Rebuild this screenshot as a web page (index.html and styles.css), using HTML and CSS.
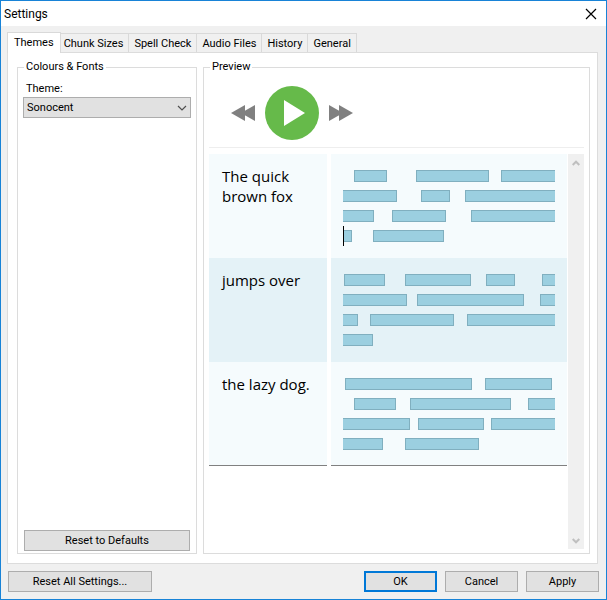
FILE: index.html
```html
<!DOCTYPE html>
<html lang="en">
<head>
    <meta charset="UTF-8">
    <meta name="viewport" content="width=device-width, initial-scale=1.0">
    <title>Settings</title>
    <link rel="stylesheet" href="styles.css">
</head>
<body>
    <div class="window">
        <header class="titlebar">
            <h1 class="title">Settings</h1>
            <button class="close" aria-label="Close">
                <svg width="12" height="12" viewBox="0 0 12 12"><path d="M1 1L11 11M11 1L1 11" fill="none" stroke="#000" stroke-width="1.2"/></svg>
            </button>
        </header>
        <main class="content">
            <nav class="tabs">
                <button class="tab active">Themes</button>
                <button class="tab">Chunk Sizes</button>
                <button class="tab">Spell Check</button>
                <button class="tab">Audio Files</button>
                <button class="tab">History</button>
                <button class="tab">General</button>
            </nav>
            <div class="page">
                <fieldset class="group colours">
                    <legend>Colours &amp; Fonts</legend>
                    <label class="theme-label" for="theme">Theme:</label>
                    <div class="select-wrap">
                        <select id="theme" class="theme">
                            <option>Sonocent</option>
                        </select>
                        <svg class="arrow" width="10" height="6" viewBox="0 0 10 6"><path d="M1 1L5 5L9 1" fill="none" stroke="#505050" stroke-width="1.2"/></svg>
                    </div>
                    <button class="btn reset">Reset to Defaults</button>
                </fieldset>
                <fieldset class="group preview">
                    <legend>Preview</legend>
                    <div class="player">
                        <button class="control" aria-label="Rewind">
                            <svg width="24" height="18" viewBox="0 0 24 18"><path d="M0 9L14 1V17ZM10 9L24 1V17Z" fill="#808080"/></svg>
                        </button>
                        <button class="control" aria-label="Play">
                            <svg width="54" height="54" viewBox="0 0 54 54"><circle cx="27" cy="27" r="27" fill="#66ba4a"/><path d="M19 14L40 27L19 40Z" fill="#fff"/></svg>
                        </button>
                        <button class="control" aria-label="Fast forward">
                            <svg width="24" height="18" viewBox="0 0 24 18"><path d="M0 1L14 9L0 17ZM10 1L24 9L10 17Z" fill="#808080"/></svg>
                        </button>
                    </div>
                    <div class="document">
                        <div class="rows">
                            <div class="row">
                                <p class="text">The quick brown fox</p>
                                <div class="audio"></div>
                            </div>
                            <div class="row alt">
                                <p class="text">jumps over</p>
                                <div class="audio"></div>
                            </div>
                            <div class="row">
                                <p class="text">the lazy dog.</p>
                                <div class="audio"></div>
                            </div>
                        </div>
                        <div class="scrollbar">
                            <svg width="8" height="6" viewBox="0 0 8 6"><path d="M.7 5L4 1.7L7.3 5" fill="none" stroke="#bfbfbf" stroke-width="2"/></svg>
                            <svg width="8" height="6" viewBox="0 0 8 6"><path d="M.7 1L4 4.3L7.3 1" fill="none" stroke="#bfbfbf" stroke-width="2"/></svg>
                        </div>
                    </div>
                </fieldset>
            </div>
        </main>
        <footer class="buttons">
            <button class="btn reset-all">Reset All Settings...</button>
            <button class="btn default">OK</button>
            <button class="btn">Cancel</button>
            <button class="btn">Apply</button>
        </footer>
    </div>
    <script src="script.js"></script>
</body>
</html>
```
FILE: styles.css
```css
* {
    box-sizing: border-box;
}
body {
    margin: 0;
    font-family: Roboto, "Liberation Sans", sans-serif;
    font-size: 11px;
    line-height: 14px;
    color: #000;
}
button, select {
    margin: 0;
    padding: 0;
    font: inherit;
    color: inherit;
}
svg {
    display: block;
}
.window {
    display: flex;
    flex-direction: column;
    min-height: 100vh;
    background: #f0f0f0;
    border: 1px solid #1883d7;
}
.titlebar {
    display: flex;
    justify-content: space-between;
    align-items: center;
    height: 25px;
    padding: 0 9px 0 3px;
    background: #fff;
}
.title {
    margin: 0;
    font-size: 12px;
    font-weight: normal;
}
.close {
    background: none;
    border: none;
}
.content {
    flex: 1;
    display: flex;
    flex-direction: column;
    padding: 6px 8px 0 6px;
}
.tabs {
    display: flex;
    align-items: flex-end;
}
.tab {
    height: 19px;
    padding: 2px 5px 0;
    background: #f0f0f0;
    border: 1px solid #d9d9d9;
    border-width: 1px 1px 0 0;
}
.tab.active {
    position: relative;
    height: 21px;
    padding: 0 6px;
    margin: 0 -2px -1px 0;
    background: #fff;
    border-left-width: 1px;
}
.page {
    flex: 1;
    display: flex;
    gap: 6px;
    padding: 7px 7px 9px 9px;
    background: #fff;
    border: 1px solid #dcdcdc;
}
.group {
    display: flex;
    flex-direction: column;
    min-width: 0;
    margin: 0;
    padding: 0 5px;
    border: 1px solid #dcdcdc;
}
.group legend {
    margin-left: 1px;
    padding: 0 2px;
}
.colours {
    flex: 0 0 180px;
    padding-bottom: 2px;
}
.theme-label {
    padding: 8px 3px 1px;
}
.select-wrap {
    position: relative;
}
.theme {
    appearance: none;
    width: 100%;
    height: 21px;
    padding: 1px 3px 0;
    background: #e1e1e1;
    border: 1px solid #adadad;
    border-radius: 0;
}
.arrow {
    position: absolute;
    top: 8px;
    right: 4px;
    pointer-events: none;
}
.btn {
    width: 73px;
    height: 21px;
    padding-top: 1px;
    background: #e1e1e1;
    border: 1px solid #adadad;
}
.btn.default {
    border: 2px solid #0078d7;
}
.reset {
    width: auto;
    margin: auto 1px 0;
}
.preview {
    flex: 1;
    padding-bottom: 4px;
}
.player {
    display: flex;
    align-items: center;
    gap: 10px;
    padding: 12px 22px 7px;
    border-bottom: 1px solid #eee;
}
.control {
    background: none;
    border: none;
}
.document {
    flex: 1;
    display: flex;
    gap: 1px;
    margin-top: 6px;
}
.rows {
    flex: 1;
}
.row {
    display: grid;
    grid-template-columns: 1fr 2fr;
    gap: 4px;
    height: 104px;
}
.text, .audio {
    margin: 0;
    background: #f5fbfd;
}
.alt .text, .alt .audio {
    background: #e4f2f7;
}
.row:last-child .text, .row:last-child .audio {
    border-bottom: 1px solid #808080;
}
.text {
    padding: 12px 13px 0;
    font-family: "Open Sans", "Noto Sans", sans-serif;
    font-size: 15px;
    line-height: 20px;
}
.audio {
    padding: 12px 12px 0;
}
.line {
    display: flex;
    align-items: center;
    height: 20px;
}
.chunk {
    flex: none;
    height: 12px;
    background: #9bcfe0;
    border: 1px solid #80afbf;
}
.chunk.from-prev {
    border-left: none;
}
.chunk.to-next {
    border-right: none;
}
.cursor {
    width: 1px;
    height: 20px;
    margin-right: -1px;
    background: #000;
    z-index: 1;
}
.scrollbar {
    display: flex;
    flex-direction: column;
    justify-content: space-between;
    align-items: center;
    width: 16px;
    padding: 6px 0 5px;
    background: #f0f0f0;
}
.buttons {
    display: flex;
    gap: 8px;
    padding: 7px;
}
.reset-all {
    width: 144px;
    margin-right: auto;
}
```
FILE: script.js
```javascript
// [start, end] of every chunk, line by line. Each line is 212 wide.
const lineWidth = 212;
const audio = [
    [
        [[11, 44], [73, 146], [158, 212]],
        [[0, 54], [78, 107], [122, 212]],
        [[0, 31], [49, 103], [128, 212]],
        [[0, 9], [30, 101]]
    ],
    [
        [[1, 42], [62, 128], [143, 172], [199, 212]],
        [[0, 64], [74, 181], [197, 212]],
        [[0, 15], [27, 111], [124, 212]],
        [[0, 30]]
    ],
    [
        [[2, 129], [142, 209]],
        [[11, 53], [67, 168], [185, 212]],
        [[0, 67], [75, 141], [148, 212]],
        [[0, 40], [62, 136]]
    ]
];

document.querySelectorAll('.audio').forEach((el, i) => {
    audio[i].forEach((chunks, n) => {
        const line = document.createElement('div');
        line.className = 'line';
        if (i === 0 && n === 3) {
            const cursor = document.createElement('div');
            cursor.className = 'cursor';
            line.appendChild(cursor);
        }
        let pos = 0;
        chunks.forEach(([start, end]) => {
            const chunk = document.createElement('div');
            chunk.className = 'chunk';
            if (start === 0) chunk.classList.add('from-prev');
            if (end === lineWidth) chunk.classList.add('to-next');
            chunk.style.marginLeft = `${(start - pos) / lineWidth * 100}%`;
            chunk.style.width = `${(end - start) / lineWidth * 100}%`;
            line.appendChild(chunk);
            pos = end;
        });
        el.appendChild(line);
    });
});
```
